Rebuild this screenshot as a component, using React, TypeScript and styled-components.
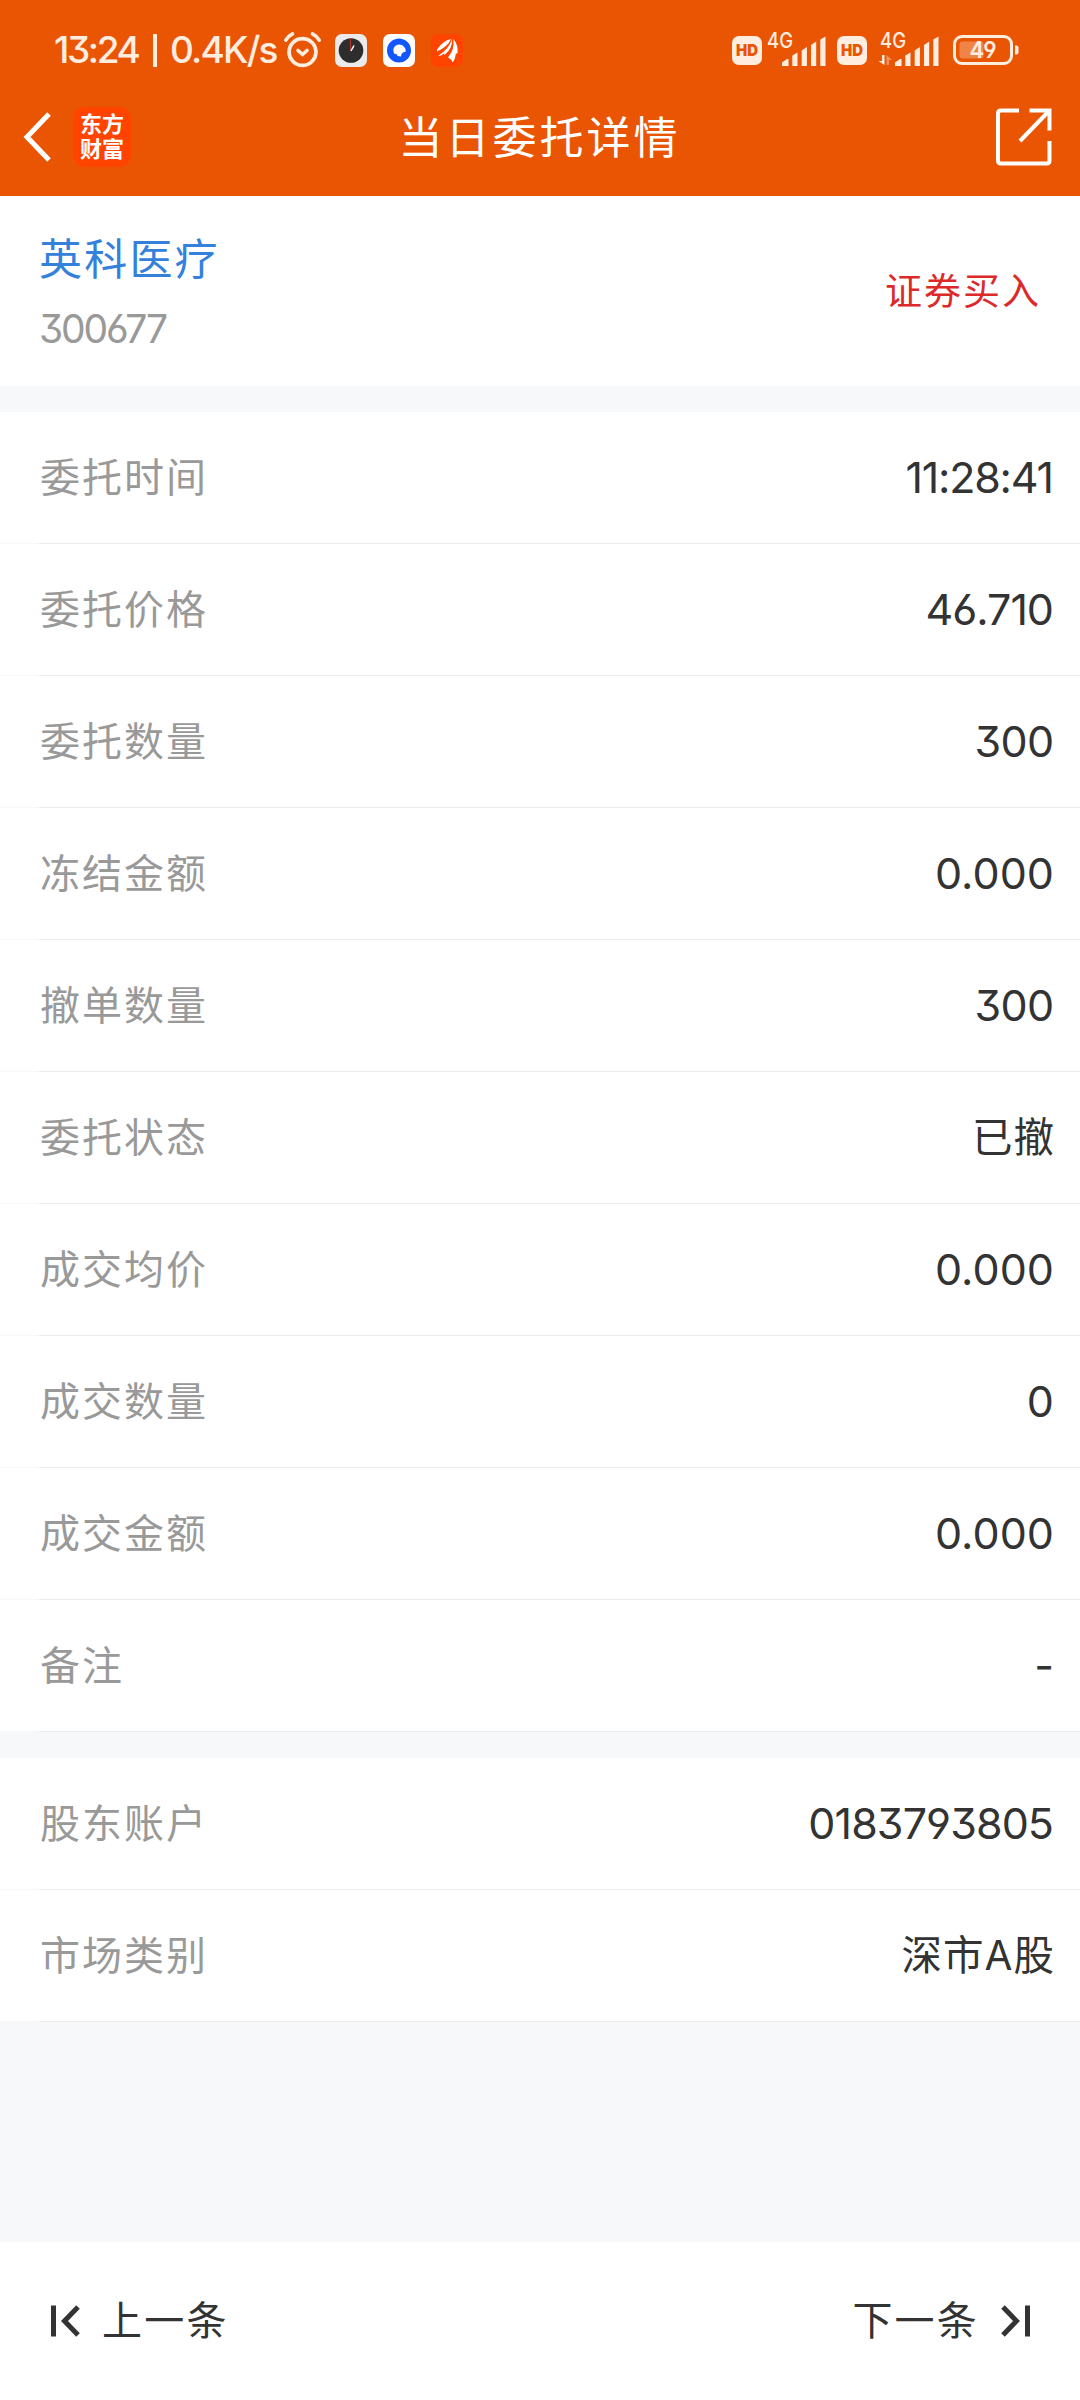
import React from "react";
import styled, { createGlobalStyle } from "styled-components";

const GlobalStyle = createGlobalStyle`
  html, body { margin: 0; padding: 0; background: #f7f8fa; }
  *, *::before, *::after { box-sizing: border-box; }
`;

const FONT = `Inter, "Noto Sans CJK SC", sans-serif`;
const STATUS = "#ffede0";

const Page = styled.div`
  width: 1080px;
  height: 2400px;
  display: flex;
  flex-direction: column;
  background: #f7f8fa;
  font-family: ${FONT};
  font-feature-settings: "cv03", "cv04", "cv09";
  color: #333;
  overflow: hidden;
  white-space: nowrap;
`;

const Header = styled.header`
  height: 196px;
  background: #ea5504;
  color: #fff;
  display: flex;
  flex-direction: column;
`;

const StatusBar = styled.div`
  height: 86px;
  padding: 14px 61px 0 54px;
  display: flex;
  align-items: center;
  justify-content: space-between;
`;

const StatusGroup = styled.div`
  display: flex;
  align-items: center;
`;

const StatusText = styled.span<{ $width: number; $spacing?: number }>`
  width: ${(p) => p.$width}px;
  font-size: 37px;
  line-height: 44px;
  font-weight: 500;
  color: ${STATUS};
  letter-spacing: ${(p) => p.$spacing ?? 0}px;
`;

const StatusDivider = styled.i`
  width: 4px;
  height: 33px;
  margin-right: 13px;
  background: ${STATUS};
`;

const StatusIcon = styled.svg<{ $gap?: number }>`
  display: block;
  flex: none;
  margin-left: ${(p) => p.$gap ?? 0}px;
  overflow: visible;
`;

const NavBar = styled.div`
  height: 110px;
  padding: 0 28px 0 23px;
  display: grid;
  grid-template-columns: 1fr auto 1fr;
  align-items: center;
  margin-top: -4px;
`;

const NavLeft = styled.div`
  display: flex;
  align-items: center;
  gap: 22px;
`;

const Logo = styled.div`
  width: 58px;
  height: 60px;
  border-radius: 12px;
  background: #ff4400;
  display: flex;
  flex-direction: column;
  align-items: center;
  justify-content: center;
  font-size: 22px;
  line-height: 25px;
  font-weight: 700;
`;

const Title = styled.h1`
  margin: 0;
  padding: 2px 0 0 4px;
  font-size: 44px;
  line-height: 60px;
  font-weight: 400;
  letter-spacing: 3px;
`;

const NavRight = styled.div`
  display: flex;
  justify-content: flex-end;
`;

const Summary = styled.section`
  height: 190px;
  padding: 0 39px 0 39px;
  background: #fff;
  display: flex;
  align-items: center;
  justify-content: space-between;
`;

const Stock = styled.div`
  display: flex;
  flex-direction: column;
  padding-top: 4px;
`;

const StockName = styled.div`
  font-size: 43px;
  line-height: 64px;
  letter-spacing: 2.2px;
  color: #3481dc;
`;

const StockCode = styled.div`
  margin-top: 8px;
  font-size: 39px;
  line-height: 60px;
  letter-spacing: -2.1px;
  color: #999;
`;

const Side = styled.div`
  padding-top: 2px;
  font-size: 37px;
  line-height: 56px;
  letter-spacing: 2px;
  color: #dc2a2a;
`;

const Group = styled.section`
  margin-top: 26px;
`;

const Row = styled.div`
  height: 132px;
  padding: 0 26px 1px 40px;
  background: linear-gradient(to right, #f7f8fa 39px, #ebebeb 39px) bottom / 100% 1px no-repeat, #fff;
  display: flex;
  align-items: center;
  justify-content: space-between;
`;

const Label = styled.span`
  font-size: 40px;
  line-height: 60px;
  letter-spacing: 2px;
  color: #999;
`;

const Value = styled.span<{ $spacing: number }>`
  padding-bottom: 2px;
  font-size: 43px;
  line-height: 60px;
  letter-spacing: ${(p) => p.$spacing}px;
  margin-right: ${(p) => -p.$spacing}px;
`;

const CjkValue = styled(Value)`
  padding-bottom: 0;
  font-size: 40.5px;
`;

const Footer = styled.footer`
  height: 158px;
  margin-top: auto;
  padding: 0 50px 0 51px;
  background: #fff;
  display: flex;
  align-items: center;
  justify-content: space-between;
`;

const Pager = styled.div`
  display: flex;
  align-items: center;
  gap: 21px;
  font-size: 40px;
  line-height: 60px;
  letter-spacing: 2.2px;
`;

type Field = { label: string; value: string; spacing?: number; cjk?: boolean };

const orderFields: Field[] = [
  { label: "委托时间", value: "11:28:41", spacing: -1.2 },
  { label: "委托价格", value: "46.710", spacing: -1 },
  { label: "委托数量", value: "300", spacing: -0.7 },
  { label: "冻结金额", value: "0.000", spacing: 0.1 },
  { label: "撤单数量", value: "300", spacing: -0.7 },
  { label: "委托状态", value: "已撤", cjk: true },
  { label: "成交均价", value: "0.000", spacing: 0.1 },
  { label: "成交数量", value: "0", spacing: 0 },
  { label: "成交金额", value: "0.000", spacing: 0.1 },
  { label: "备注", value: "-", spacing: 0 },
];

const accountFields: Field[] = [
  { label: "股东账户", value: "0183793805", spacing: -0.9 },
  { label: "市场类别", value: "深市A股", cjk: true },
];

const FieldRow = ({ label, value, spacing = 0, cjk }: Field) => (
  <Row>
    <Label>{label}</Label>
    {cjk ? <CjkValue $spacing={1}>{value}</CjkValue> : <Value $spacing={spacing}>{value}</Value>}
  </Row>
);

const AlarmIcon = () => (
  <StatusIcon $gap={6} width="38" height="38" viewBox="0 0 38 38" fill="none" stroke={STATUS} strokeLinecap="round">
    <circle cx="18.500" cy="21" r="13.4" strokeWidth="3.8" />
    <path d="M14 19.5 18.500 23.500 23 19.5" strokeWidth="3.6" strokeLinejoin="round" />
    <path d="M1.800 9.200Q4 5 8.500 2.800M35.200 9.200Q33 5 28.500 2.800" strokeWidth="3.6" />
  </StatusIcon>
);

const ClockAppIcon = () => (
  <StatusIcon $gap={13} width="32" height="33" viewBox="0 0 32 33">
    <rect width="32" height="33" rx="7" fill="#ebebeb" />
    <circle cx="16" cy="16.500" r="12.300" fill="#2d2d2d" />
    <path d="M15.500 4.500v12" stroke="#a8322a" strokeWidth="1.300" />
    <path d="M16 17 19 11.500" stroke="#fff" strokeWidth="1.500" />
  </StatusIcon>
);

const BlueAppIcon = () => (
  <StatusIcon $gap={16} width="32" height="33" viewBox="0 0 32 33">
    <rect width="32" height="33" rx="7" fill="#fff" />
    <circle cx="16" cy="16.500" r="12" fill="#1257fb" />
    <path d="M10.300 16A6 6 0 0 1 21 12.800L22.500 15V18Q18.500 17.500 18 22.500L14.500 22 14 20.500 11 19.500Z" fill="#fff" />
  </StatusIcon>
);

const FeatherAppIcon = () => (
  <StatusIcon $gap={16} width="32" height="33" viewBox="0 0 32 33">
    <rect width="32" height="33" rx="7" fill="#ff4400" />
    <path d="M6 15.500Q12 6.500 20 5Q17 12.500 6 17.500ZM7 22Q18 15 21 5Q22 14 13.500 21L13 19.500Q10 22 7 22ZM22.300 5Q27.500 11 26.500 19L24.800 20Q24.500 25 21.500 28.500Q20.500 25 17 23.500Q24 15 22.300 5Z" fill="#fff" />
  </StatusIcon>
);

const HdIcon = ({ gap = 0 }: { gap?: number }) => (
  <StatusIcon $gap={gap} width="30" height="29" viewBox="0 0 30 29">
    <rect width="30" height="29" rx="7" fill={STATUS} />
    <text x="15" y="20" textAnchor="middle" fontSize="16" fontWeight="900" fontFamily="Inter, sans-serif" fill="#ea5504" textLength="22" lengthAdjust="spacingAndGlyphs">HD</text>
  </StatusIcon>
);

const SignalIcon = ({ gap, data }: { gap: number; data?: boolean }) => (
  <StatusIcon $gap={gap} width="63" height="44" viewBox="-3 -2 63 44" fill={STATUS}>
    <text x="0" y="17.500" fontSize="21" fontWeight="500" fontFamily="Inter, sans-serif" textLength="26" lengthAdjust="spacingAndGlyphs">4G</text>
    <path d="M15 36V32.500L20 29H21.500V36ZM25.300 36V25.500L30.500 22.500V36ZM34.700 36V20.500L39.900 17V36ZM44 36V15L49.200 11.500V36ZM53.300 36V9.500L58.500 6.500V36Z" />
    {data && (
      <>
        <path d="M4.500 25V35L-1.500 31H2V25Z" />
        <path d="M6.500 35V25L12 30H9V35Z" opacity=".4" />
      </>
    )}
  </StatusIcon>
);

const BatteryIcon = () => (
  <StatusIcon $gap={13} width="66" height="30" viewBox="0 0 66 30">
    <rect x="1.500" y="1.500" width="57" height="27" rx="7.500" fill="none" stroke={STATUS} strokeWidth="3" />
    <rect x="6.500" y="6.500" width="24" height="17" rx="3" fill={STATUS} opacity=".3" />
    <path d="M62 10.500h1.500q2 0 2 2v5q0 2-2 2H62Z" fill={STATUS} />
    <text x="30" y="23.300" textAnchor="middle" fontSize="23.500" fontWeight="600" fontFamily="Inter, sans-serif" fill={STATUS} textLength="27" lengthAdjust="spacingAndGlyphs">49</text>
  </StatusIcon>
);

const BackIcon = () => (
  <svg width="28" height="50" viewBox="0 0 28 50" fill="none" stroke="#fff" strokeWidth="5">
    <path d="M26 2 4 25 26 48" />
  </svg>
);

const ShareIcon = () => (
  <svg width="56" height="58" viewBox="0 0 56 58" fill="none" stroke="#fff" strokeWidth="4">
    <path d="M23 2.500H5Q2 2.500 2 5.500V52.500Q2 55.500 5 55.500H50.500Q53.500 55.500 53.500 52.500V33" />
    <path d="M33.500 2.500H53.500V22.500" />
    <path d="M52.500 3.500 24 33" />
  </svg>
);

const FirstIcon = () => (
  <svg width="30" height="32" viewBox="0 0 30 32" fill="none" stroke="#333" strokeWidth="5">
    <path d="M2.500 .5V31.500M27 2 13.500 16 27 30" />
  </svg>
);

const LastIcon = () => (
  <svg width="30" height="32" viewBox="0 0 30 32" fill="none" stroke="#333" strokeWidth="5">
    <path d="M27.500 .5V31.500M3 2 16.500 16 3 30" />
  </svg>
);

export default function App() {
  return (
    <>
      <GlobalStyle />
      <Page>
        <Header>
          <StatusBar>
            <StatusGroup>
              <StatusText $width={99} $spacing={-2.4}>13:24</StatusText>
              <StatusDivider />
              <StatusText $width={108} $spacing={-1.8}>0.4K/s</StatusText>
              <AlarmIcon />
              <ClockAppIcon />
              <BlueAppIcon />
              <FeatherAppIcon />
            </StatusGroup>
            <StatusGroup>
              <HdIcon />
              <SignalIcon gap={2} />
              <HdIcon gap={10} />
              <SignalIcon gap={10} data />
              <BatteryIcon />
            </StatusGroup>
          </StatusBar>
          <NavBar>
            <NavLeft>
              <BackIcon />
              <Logo>
                <span>东方</span>
                <span>财富</span>
              </Logo>
            </NavLeft>
            <Title>当日委托详情</Title>
            <NavRight>
              <ShareIcon />
            </NavRight>
          </NavBar>
        </Header>
        <Summary>
          <Stock>
            <StockName>英科医疗</StockName>
            <StockCode>300677</StockCode>
          </Stock>
          <Side>证券买入</Side>
        </Summary>
        <Group>
          {orderFields.map((f) => (
            <FieldRow key={f.label} {...f} />
          ))}
        </Group>
        <Group>
          {accountFields.map((f) => (
            <FieldRow key={f.label} {...f} />
          ))}
        </Group>
        <Footer>
          <Pager>
            <FirstIcon />
            <span>上一条</span>
          </Pager>
          <Pager>
            <span>下一条</span>
            <LastIcon />
          </Pager>
        </Footer>
      </Page>
    </>
  );
}
